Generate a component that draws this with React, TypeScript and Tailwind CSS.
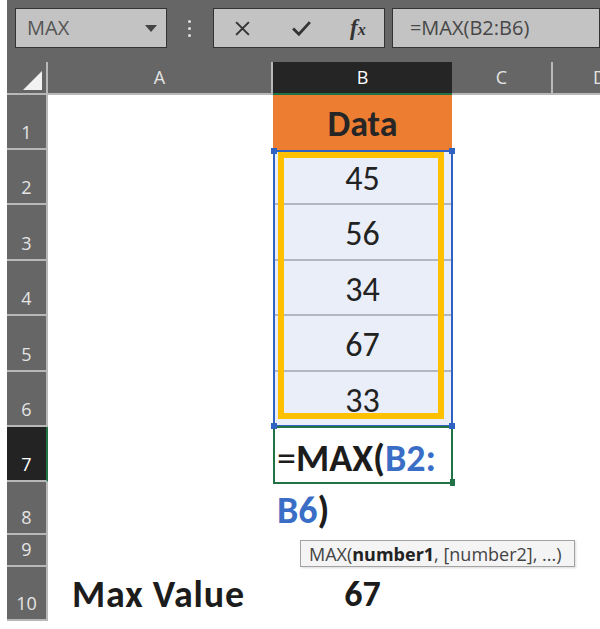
import React from "react";

const ROWS = [
  { n: 1, h: "h-[55px]" },
  { n: 2, h: "h-[55px]" },
  { n: 3, h: "h-[56px]" },
  { n: 4, h: "h-[55px]" },
  { n: 5, h: "h-[56px]" },
  { n: 6, h: "h-[55px]" },
  { n: 7, h: "h-[55px]" },
  { n: 8, h: "h-[53px]" },
  { n: 9, h: "h-[32px]" },
  { n: 10, h: "h-[54px]" },
];

const DATA: Record<number, number> = { 2: 45, 3: 56, 4: 34, 5: 67, 6: 33 };

const cellFont = { fontFamily: "Calibri, Carlito, Lato, sans-serif" };
const uiFont = { fontFamily: "'Open Sans', 'Noto Sans', sans-serif" };

function Toolbar() {
  return (
    <div className="flex h-[62px] items-start bg-[#666666] pl-[8px] pt-[8px]" style={uiFont}>
      <div className="flex h-[40px] w-[160px] items-center justify-between border border-[#333] bg-[#c3c3c3] pl-[11px] pr-[9px]">
        <span className="text-[20px] font-medium text-[#555]">MAX</span>
        <svg width="12" height="7" viewBox="0 0 12 7">
          <path d="M0 0 L12 0 L6 7 Z" fill="#444" />
        </svg>
      </div>
      <div className="flex h-[40px] w-[49px] flex-col items-center justify-center gap-[4px]">
        <span className="h-[3px] w-[3px] rounded-full bg-[#e0e0e0]" />
        <span className="h-[3px] w-[3px] rounded-full bg-[#e0e0e0]" />
        <span className="h-[3px] w-[3px] rounded-full bg-[#e0e0e0]" />
      </div>
      <div className="flex h-[40px] w-[173px] items-center border border-[#333] bg-[#c3c3c3]">
        <div className="flex w-[58px] justify-center">
          <svg width="17" height="17" viewBox="0 0 16 16">
            <path d="M2 2 L14 14 M14 2 L2 14" stroke="#333" strokeWidth="1.9" />
          </svg>
        </div>
        <div className="flex w-[60px] justify-center">
          <svg width="21" height="17" viewBox="0 0 20 16">
            <path d="M2 8 L7.5 13.5 L18 2" stroke="#333" strokeWidth="2.6" fill="none" />
          </svg>
        </div>
        <div className="flex w-[52px] justify-center">
          <span
            className="font-bold italic text-[#333]"
            style={{ fontFamily: "'Liberation Serif', serif" }}
          >
            <span className="text-[23px]">f</span>
            <span className="text-[16px]">x</span>
          </span>
        </div>
      </div>
      <div className="ml-[7px] flex h-[40px] w-[220px] items-center border border-[#333] bg-[#c3c3c3] pl-[17px]">
        <span className="text-[20px] text-[#474747]">=MAX(B2:B6)</span>
      </div>
    </div>
  );
}

function HeaderRow() {
  return (
    <div className="flex h-[33px] text-[18px] text-[#e4e4e4]" style={uiFont}>
      <div className="flex w-[41px] items-end justify-end border-r-2 border-b-2 border-[#b8b8b8] bg-[#666666] pb-[3px] pr-[4px]">
        <svg width="19" height="19" viewBox="0 0 19 19">
          <path d="M19 0 L19 19 L0 19 Z" fill="#f2f2f2" />
        </svg>
      </div>
      <div className="flex w-[225px] items-center justify-center border-r-2 border-b-2 border-[#b8b8b8] bg-[#666666]">
        A
      </div>
      <div className="flex w-[179px] items-center justify-center border-b-2 border-[#217346] bg-[#252525] text-white">
        B
      </div>
      <div className="flex w-[101px] items-center justify-center border-r-2 border-b-2 border-[#b8b8b8] bg-[#666666]">
        C
      </div>
      <div className="flex flex-1 items-center justify-end overflow-hidden border-b-2 border-[#b8b8b8] bg-[#666666]">
        <span className="mr-[-6px]">D</span>
      </div>
    </div>
  );
}

function BCell({ n }: { n: number }) {
  if (n === 1) {
    return (
      <div className="flex h-full w-[179px] items-center justify-center bg-[#ed7d31] pt-[2px] text-[36px] font-bold text-[#262626]">
        Data
      </div>
    );
  }
  if (DATA[n] !== undefined) {
    return (
      <div className="flex h-full w-[179px] items-center justify-center border-b-2 border-[#b2b6be] bg-[#e9eef8] pt-[3px] text-[34px] text-[#222]">
        {DATA[n]}
      </div>
    );
  }
  if (n === 10) {
    return (
      <div className="flex h-full w-[179px] items-end justify-center pb-[5px] text-[36px] font-bold leading-[44px] text-[#1c1c1c]">
        67
      </div>
    );
  }
  return <div className="h-full w-[179px]" />;
}

function Grid() {
  return (
    <div style={cellFont}>
      {ROWS.map((r) => (
        <div key={r.n} className={`flex ${r.h}`}>
          <div
            className={
              r.n === 7
                ? "flex w-[41px] items-end justify-center border-r-2 border-b-2 border-r-[#217346] border-b-[#b8b8b8] bg-[#232323] pb-[2px] text-[18px] text-white"
                : "flex w-[41px] items-end justify-center border-r-2 border-b-2 border-[#b8b8b8] bg-[#666666] pb-[2px] text-[18px] text-[#e4e4e4]"
            }
            style={uiFont}
          >
            {r.n}
          </div>
          <div className="flex h-full w-[225px] items-end pb-[5px] pl-[24px]">
            {r.n === 10 && (
              <span className="text-[38px] font-bold leading-[44px] tracking-[0.8px] text-[#1c1c1c]">
                Max Value
              </span>
            )}
          </div>
          <BCell n={r.n} />
          <div className="h-full flex-1" />
        </div>
      ))}
    </div>
  );
}

export default function App() {
  return (
    <div className="relative h-[629px] w-[600px] overflow-hidden bg-white pl-[7px]">
      <Toolbar />
      <HeaderRow />
      <Grid />

      {/* range B2:B6 highlight */}
      <div className="absolute left-[273px] top-[150px] h-[277px] w-[180px] border-2 border-[#3062c2]" />
      <div className="absolute left-[278px] top-[152px] h-[267px] w-[166px] border-[6px] border-[#ffc000]" />
      <div className="absolute left-[271px] top-[148px] h-[6px] w-[6px] bg-[#3062c2]" />
      <div className="absolute left-[449px] top-[148px] h-[6px] w-[6px] bg-[#3062c2]" />

      {/* cell editor B7 */}
      <div className="absolute left-[273px] top-[426px] h-[58px] w-[180px] border-2 border-[#217346]" />
      <div className="absolute left-[271px] top-[423px] h-[6px] w-[6px] bg-[#3062c2]" />
      <div className="absolute left-[449px] top-[423px] h-[6px] w-[6px] bg-[#3062c2]" />
      <div className="absolute left-[450px] top-[479px] h-[7px] w-[5px] bg-[#217346]" />
      <div
        className="absolute left-[277px] top-[432px] text-[38px] font-bold leading-[52px] text-[#1c1c1c]"
        style={cellFont}
      >
        <span className="font-normal">=</span>MAX(<span className="text-[#3a6ec6]">B2:</span>
        <br />
        <span className="text-[#3a6ec6]">B6</span>)
      </div>

      {/* function tooltip */}
      <div
        className="absolute left-[300px] top-[540px] flex h-[27px] w-[275px] items-center border border-[#a3a3a3] bg-[#f4f4f4] pl-[8px] text-[18px] leading-none text-[#444] shadow-[1px_1px_2px_rgba(0,0,0,0.15)]"
        style={uiFont}
      >
        MAX(<span className="font-bold text-[#222]">number1</span>, [number2], ...)
      </div>
    </div>
  );
}
